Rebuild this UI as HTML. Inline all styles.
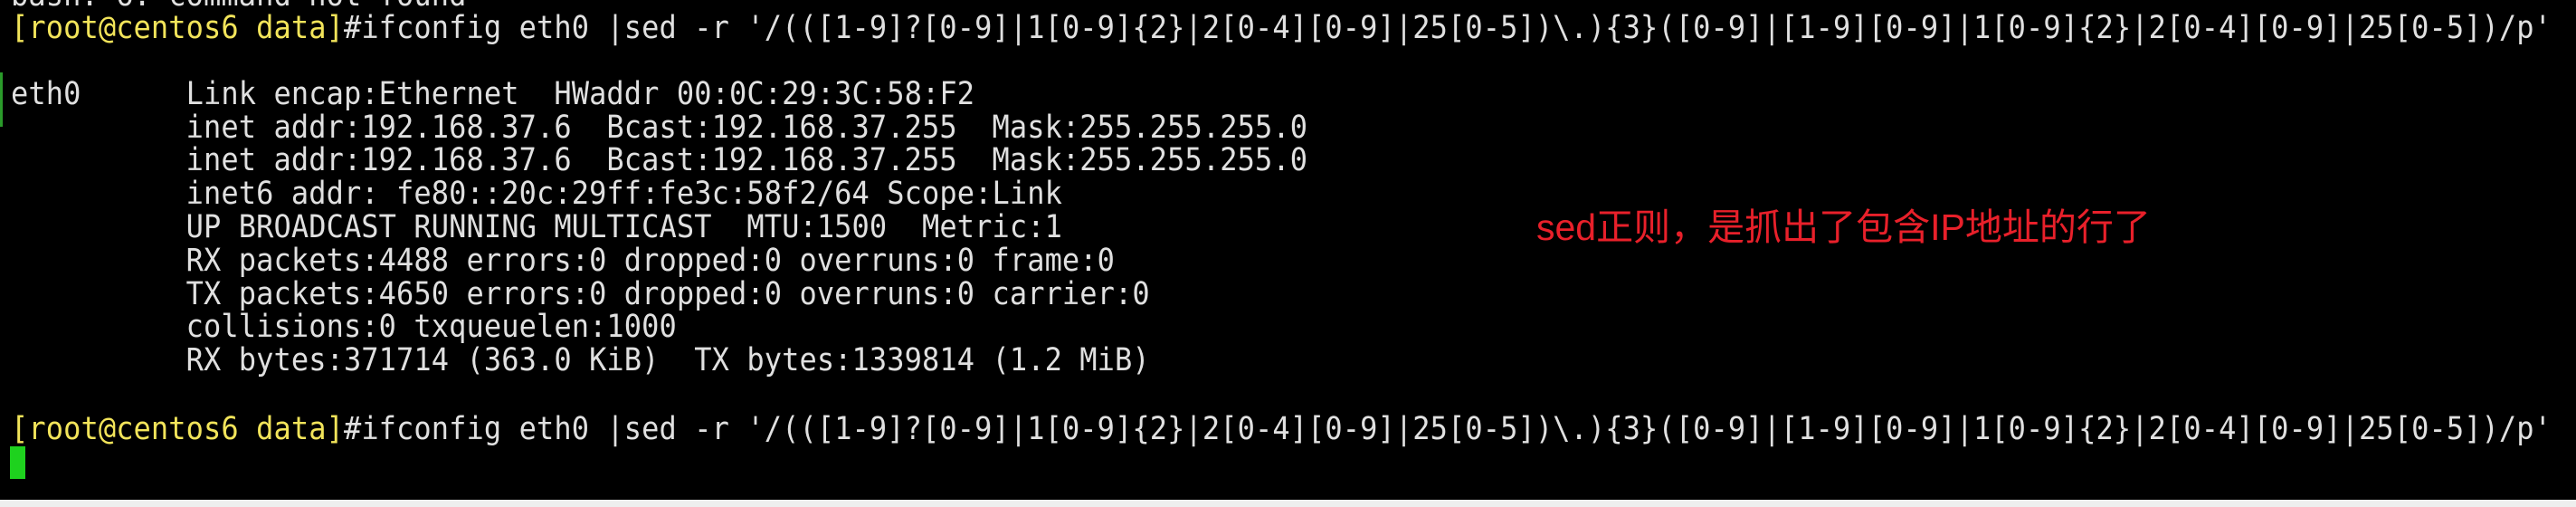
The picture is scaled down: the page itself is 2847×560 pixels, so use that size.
<!DOCTYPE html>
<html><head><meta charset="utf-8"><style>
html,body{margin:0;padding:0;width:2847px;height:560px;overflow:hidden;background:#000}
.t{position:absolute;left:12px;font-family:"DejaVu Sans Mono","Liberation Mono",monospace;font-size:32px;letter-spacing:0.1px;color:#e0e0e0;white-space:pre;line-height:36px;transform:scaleY(1.08);transform-origin:0 50%}
.y{color:#f2e45a}
.r{position:absolute;left:1698px;top:217px;font-family:"Liberation Sans","Noto Sans CJK SC",sans-serif;font-size:41px;color:#e8202a;white-space:pre}
.cur{position:absolute;left:11px;top:493px;width:17px;height:36px;background:#1ed21e}
.bot{position:absolute;left:0;top:552px;width:2847px;height:8px;background:#eeeeee}
.lb{position:absolute;left:0;top:80px;width:3px;height:60px;background:#2a9a2a}
</style></head><body>
<div class="t" style="top:-24px">bash: 6: command not found</div>
<div class="t" style="top:12px"><span class="y">[root@centos6 data]</span>#ifconfig eth0 |sed -r '/(([1-9]?[0-9]|1[0-9]{2}|2[0-4][0-9]|25[0-5])\.){3}([0-9]|[1-9][0-9]|1[0-9]{2}|2[0-4][0-9]|25[0-5])/p'</div>
<div class="t" style="top:85px">eth0      Link encap:Ethernet  HWaddr 00:0C:29:3C:58:F2  </div>
<div class="t" style="top:122px">          inet addr:192.168.37.6  Bcast:192.168.37.255  Mask:255.255.255.0</div>
<div class="t" style="top:158px">          inet addr:192.168.37.6  Bcast:192.168.37.255  Mask:255.255.255.0</div>
<div class="t" style="top:195px">          inet6 addr: fe80::20c:29ff:fe3c:58f2/64 Scope:Link</div>
<div class="t" style="top:232px">          UP BROADCAST RUNNING MULTICAST  MTU:1500  Metric:1</div>
<div class="t" style="top:269px">          RX packets:4488 errors:0 dropped:0 overruns:0 frame:0</div>
<div class="t" style="top:306px">          TX packets:4650 errors:0 dropped:0 overruns:0 carrier:0</div>
<div class="t" style="top:342px">          collisions:0 txqueuelen:1000 </div>
<div class="t" style="top:379px">          RX bytes:371714 (363.0 KiB)  TX bytes:1339814 (1.2 MiB)</div>
<div class="t" style="top:455px"><span class="y">[root@centos6 data]</span>#ifconfig eth0 |sed -r '/(([1-9]?[0-9]|1[0-9]{2}|2[0-4][0-9]|25[0-5])\.){3}([0-9]|[1-9][0-9]|1[0-9]{2}|2[0-4][0-9]|25[0-5])/p'</div>
<div class="cur"></div>
<div class="r">sed正则，是抓出了包含IP地址的行了</div>
<div class="lb"></div>
<div class="bot"></div>
</body></html>
